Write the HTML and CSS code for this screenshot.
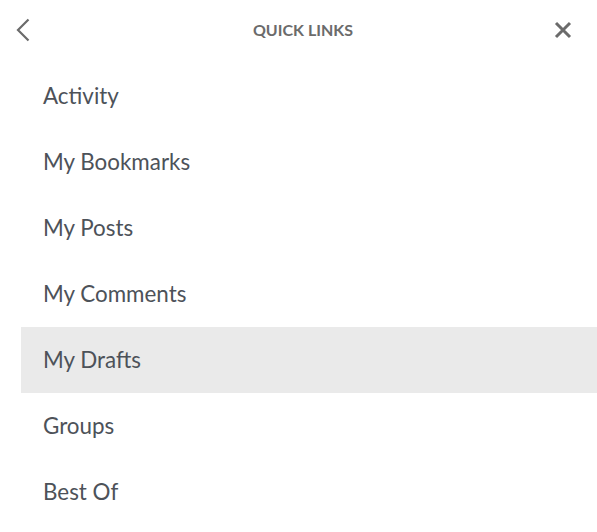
FILE: index.html
```html
<!DOCTYPE html>
<html lang="en">
<head>
<meta charset="utf-8">
<title>Quick Links</title>
<link rel="stylesheet" href="styles.css">
</head>
<body>
<div class="panel">
  <header class="header">
    <button class="icon-btn back" aria-label="Back">
      <svg width="14" height="24" viewBox="0 0 14 24"><path d="M12.5 1.5 L2 12 L12.5 22.5" fill="none" stroke="#6b6b6b" stroke-width="2.2"/></svg>
    </button>
    <h1 class="title">QUICK LINKS</h1>
    <button class="icon-btn close" aria-label="Close">
      <svg width="18" height="18" viewBox="0 0 18 18"><path d="M2 2 L16 16 M16 2 L2 16" fill="none" stroke="#6b6b6b" stroke-width="3"/></svg>
    </button>
  </header>
  <ul class="links">
    <li class="link">Activity</li>
    <li class="link">My Bookmarks</li>
    <li class="link">My Posts</li>
    <li class="link">My Comments</li>
    <li class="link active">My Drafts</li>
    <li class="link">Groups</li>
    <li class="link">Best Of</li>
  </ul>
</div>
</body>
</html>
```
FILE: styles.css
```css
html, body {
  margin: 0;
  padding: 0;
  background: #fff;
}
.panel {
  width: 597px;
  font-family: "Lato", "Open Sans", sans-serif;
}
.header {
  height: 63px;
  display: grid;
  grid-template-columns: 1fr auto 1fr;
  align-items: center;
}
.icon-btn {
  background: none;
  border: 0;
  padding: 0;
  display: flex;
  align-items: center;
  cursor: pointer;
}
.back {
  justify-self: start;
  margin-left: 16px;
  margin-top: -4px;
}
.close {
  justify-self: end;
  margin-right: 25px;
  margin-top: -4px;
}
.title {
  margin: -4px 0 0 0;
  padding-left: 9px;
  font-size: 16px;
  font-weight: 700;
  color: #6b6b6b;
  letter-spacing: 0;
}
.links {
  list-style: none;
  margin: 0;
  padding: 0 0 0 21px;
}
.link {
  height: 66px;
  box-sizing: border-box;
  padding-bottom: 2px;
  display: flex;
  align-items: center;
  padding-left: 22px;
  font-size: 22.4px;
  color: #4d5259;
}
.link.active {
  background: #eaeaea;
}
```
